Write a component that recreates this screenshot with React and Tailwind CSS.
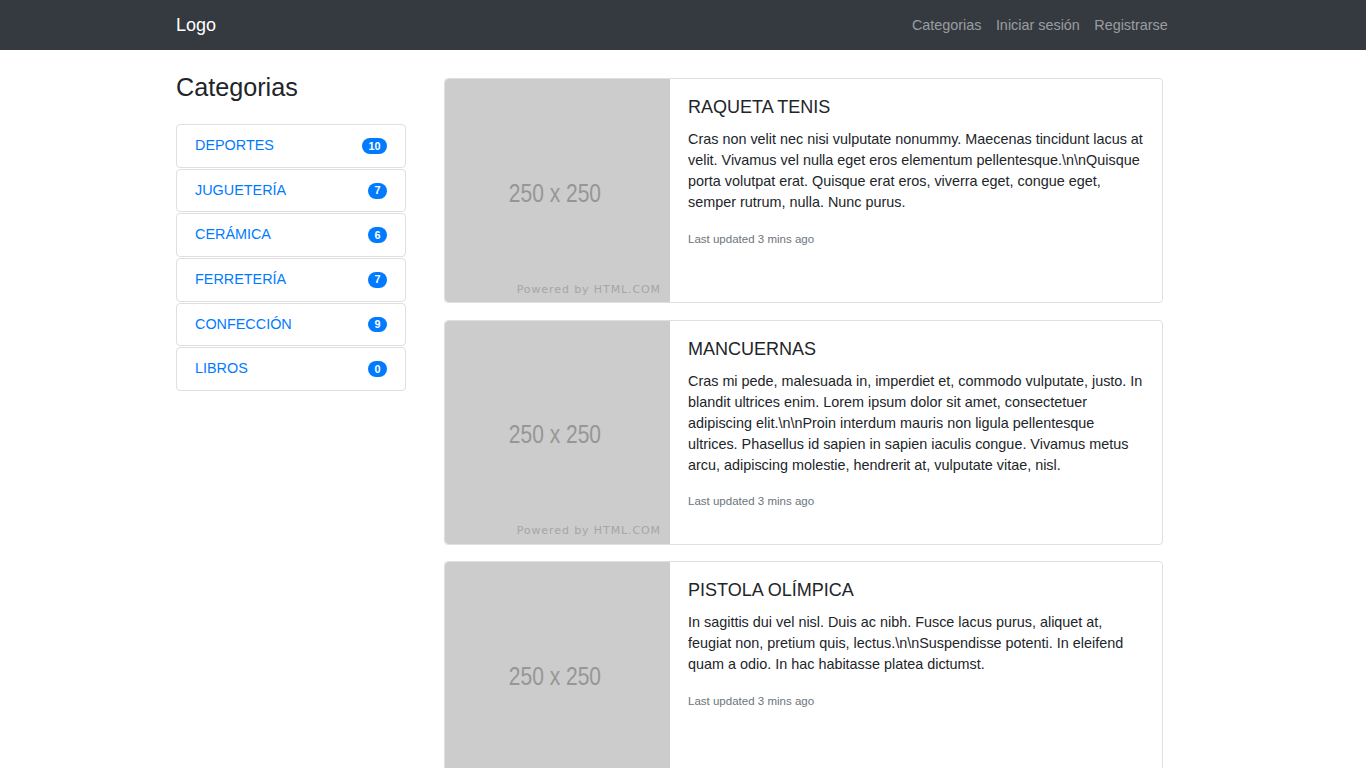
import React from "react";

const categories = [
  { name: "DEPORTES", count: 10 },
  { name: "JUGUETERÍA", count: 7 },
  { name: "CERÁMICA", count: 6 },
  { name: "FERRETERÍA", count: 7 },
  { name: "CONFECCIÓN", count: 9 },
  { name: "LIBROS", count: 0 },
];

const products = [
  {
    title: "RAQUETA TENIS",
    text: "Cras non velit nec nisi vulputate nonummy. Maecenas tincidunt lacus at velit. Vivamus vel nulla eget eros elementum pellentesque.\\n\\nQuisque porta volutpat erat. Quisque erat eros, viverra eget, congue eget, semper rutrum, nulla. Nunc purus.",
  },
  {
    title: "MANCUERNAS",
    text: "Cras mi pede, malesuada in, imperdiet et, commodo vulputate, justo. In blandit ultrices enim. Lorem ipsum dolor sit amet, consectetuer adipiscing elit.\\n\\nProin interdum mauris non ligula pellentesque ultrices. Phasellus id sapien in sapien iaculis congue. Vivamus metus arcu, adipiscing molestie, hendrerit at, vulputate vitae, nisl.",
  },
  {
    title: "PISTOLA OLÍMPICA",
    text: "In sagittis dui vel nisl. Duis ac nibh. Fusce lacus purus, aliquet at, feugiat non, pretium quis, lectus.\\n\\nSuspendisse potenti. In eleifend quam a odio. In hac habitasse platea dictumst.",
  },
  {
    title: "BALÓN FÚTBOL",
    text: "Aliquam quis turpis eget elit sodales scelerisque. Mauris sit amet eros. Suspendisse accumsan tortor quis turpis.\\n\\nSed ante. Vivamus tortor. Duis mattis egestas metus.",
  },
  {
    title: "BICICLETA",
    text: "Nullam porttitor lacus at turpis. Donec posuere metus vitae ipsum. Aliquam non mauris.\\n\\nMorbi non lectus. Aliquam sit amet diam in magna bibendum imperdiet. Nullam orci pede, venenatis non, sodales sed, tincidunt eu, felis.",
  },
  {
    title: "PATINES",
    text: "Fusce posuere felis sed lacus. Morbi sem mauris, laoreet ut, rhoncus aliquet, pulvinar sed, nisl. Nunc rhoncus dui vel sem.\\n\\nSed sagittis. Nam congue, risus semper porta volutpat, quam pede lobortis ligula, sit amet eleifend pede libero quis orci.",
  },
  {
    title: "CASCO CICLISMO",
    text: "Maecenas ut massa quis augue luctus tincidunt. Nulla mollis molestie lorem. Quisque ut erat.\\n\\nCurabitur gravida nisi at nibh. In hac habitasse platea dictumst. Aliquam augue quam, sollicitudin vitae, consectetuer eget, rutrum at, lorem.",
  },
  {
    title: "GUANTES BOXEO",
    text: "Integer tincidunt ante vel ipsum. Praesent blandit lacinia erat. Vestibulum sed magna at nunc commodo placerat.\\n\\nPraesent blandit. Nam nulla. Integer pede justo, lacinia eget, tincidunt eget, tempus vel, pede.",
  },
  {
    title: "PELOTA BALONCESTO",
    text: "Morbi porttitor lorem id ligula. Suspendisse ornare consequat lectus. In est risus, auctor sed, tristique in, tempus sit amet, sem.\\n\\nFusce consequat. Nulla nisl. Nunc nisl.",
  },
  {
    title: "RED VOLEIBOL",
    text: "Duis bibendum, felis sed interdum venenatis, turpis enim blandit mi, in porttitor pede justo eu massa. Donec dapibus.\\n\\nDuis at velit eu est congue elementum. In hac habitasse platea dictumst.",
  },
];

function Placeholder() {
  return (
    <div className="relative w-[225px] h-full shrink-0 bg-[#cccccc] rounded-l-[4px] flex items-center justify-center">
      <span
        className="inline-block text-[25px] text-[#969696] scale-x-[0.84] mt-[6px] mr-[5px]"
        style={{ fontFamily: '"Liberation Sans", Arial, sans-serif' }}
      >
        250 x 250
      </span>
      <span
        className="absolute right-[9px] bottom-[4px] text-[11px] tracking-[0.9px] text-[#a6a6a6]"
        style={{ fontFamily: '"DejaVu Sans", "Open Sans", sans-serif' }}
      >
        Powered by HTML.COM
      </span>
    </div>
  );
}

function ProductCard({ title, text }) {
  return (
    <div className="flex h-[225px] border border-[#dfdfdf] rounded-[4px] bg-white">
      <Placeholder />
      <div className="flex-1 pl-[18px] pr-[18px] pt-[18px]">
        <h5 className="text-[18px] leading-[1.2] text-[#212529] mb-[10.5px]">{title}</h5>
        <p className="text-[14.4px] leading-[21px] text-[#212529]">{text}</p>
        <p className="mt-[17.5px] text-[11.52px] leading-[17px] text-[#6c757d]">
          Last updated 3 mins ago
        </p>
      </div>
    </div>
  );
}

export default function App() {
  return (
    <div
      className="min-h-screen bg-white text-[#212529]"
      style={{ fontFamily: '"Liberation Sans", Arial, Helvetica, sans-serif' }}
    >
      <nav className="h-[50px] bg-[#343a40] pr-[15px]">
        <div className="w-[999px] mx-auto h-full flex items-center justify-between pt-[1px]">
          <span className="text-[18px] text-white">Logo</span>
          <div className="flex items-center text-[14.4px] text-[rgba(255,255,255,0.5)]">
            <span className="px-[7.2px]">Categorias</span>
            <span className="px-[7.2px]">Iniciar sesión</span>
            <span className="px-[7.2px]">Registrarse</span>
          </div>
        </div>
      </nav>

      <div className="pr-[15px]">
        <main className="w-[999px] mx-auto flex gap-[38px] pb-[20px]">
          <aside className="w-[230px] shrink-0 pt-[22px]">
            <h3 className="text-[25.2px] leading-[1.2] mb-[22px]">Categorias</h3>
            <ul className="flex flex-col gap-[1px]">
              {categories.map((c) => (
                <li
                  key={c.name}
                  className="h-[43.6px] border border-[#dfdfdf] rounded-[4px] flex items-center justify-between pl-[18px] pr-[18px]"
                >
                  <span className="text-[14.4px] text-[#007bff]">{c.name}</span>
                  <span className="bg-[#007bff] text-white text-[10.8px] font-bold leading-none rounded-full px-[6.5px] py-[2.5px]">
                    {c.count}
                  </span>
                </li>
              ))}
            </ul>
          </aside>

          <section className="w-[719px] pt-[28px] flex flex-col gap-[16.5px]">
            {products.map((p) => (
              <ProductCard key={p.title} title={p.title} text={p.text} />
            ))}
          </section>
        </main>
      </div>
    </div>
  );
}
